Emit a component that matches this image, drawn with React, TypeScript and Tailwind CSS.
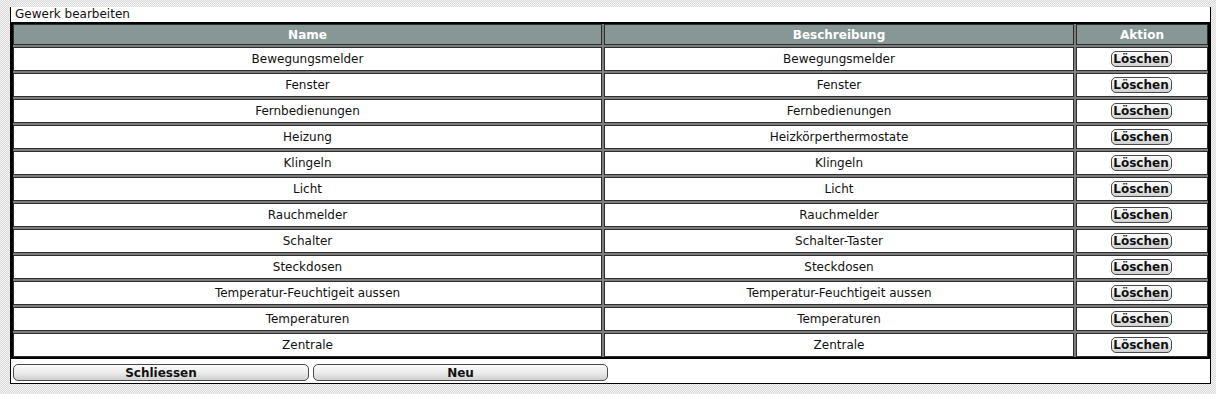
import React from 'react'

const rows: [string, string][] = [
  ['Bewegungsmelder', 'Bewegungsmelder'],
  ['Fenster', 'Fenster'],
  ['Fernbedienungen', 'Fernbedienungen'],
  ['Heizung', 'Heizkörperthermostate'],
  ['Klingeln', 'Klingeln'],
  ['Licht', 'Licht'],
  ['Rauchmelder', 'Rauchmelder'],
  ['Schalter', 'Schalter-Taster'],
  ['Steckdosen', 'Steckdosen'],
  ['Temperatur-Feuchtigeit aussen', 'Temperatur-Feuchtigeit aussen'],
  ['Temperaturen', 'Temperaturen'],
  ['Zentrale', 'Zentrale'],
]

const btn =
  'border border-[#4a4a4a] rounded-[5px] bg-gradient-to-b from-[#fbfbfb] via-[#ececec] to-[#cfcfcf] font-bold text-[12px] leading-none text-[#111]'

const head = 'h-[21px] bg-[#879795] border border-[#2e2e2e] flex items-center justify-center text-white font-bold'
const cell = 'h-[24px] bg-white border border-[#2e2e2e] flex items-center justify-center'

export default function App() {
  return (
    <div
      className="w-[1216px] h-[394px] overflow-hidden pt-[7px] pl-[10px] bg-[repeating-conic-gradient(#d9d9d9_0_25%,#f5f5f5_0_50%)] bg-[length:2px_2px]"
      style={{ fontFamily: '"DejaVu Sans", Verdana, sans-serif' }}
    >
      <div className="w-[1201px] bg-white border-x border-b border-black text-[12px] text-[#111]">
        <div className="h-[15px] pl-[4px] leading-[15px]">Gewerk bearbeiten</div>

        <div className="border-2 border-black bg-[#7d7d7d] grid grid-cols-[589px_470px_132px] gap-[2px]">
          <div className={head}>Name</div>
          <div className={head}>Beschreibung</div>
          <div className={head}>Aktion</div>
          {rows.map(([name, desc]) => (
            <React.Fragment key={name}>
              <div className={cell}>{name}</div>
              <div className={cell}>{desc}</div>
              <div className={cell}>
                <button className={`${btn} w-[61px] h-[16px] rounded-[4px] -translate-x-[1px]`}>Löschen</button>
              </div>
            </React.Fragment>
          ))}
        </div>

        <div className="flex gap-[4px] pl-[2px] pt-[5px] pb-[2px]">
          <button className={`${btn} w-[296px] h-[17px]`}>Schliessen</button>
          <button className={`${btn} w-[295px] h-[17px]`}>Neu</button>
        </div>
      </div>
    </div>
  )
}
